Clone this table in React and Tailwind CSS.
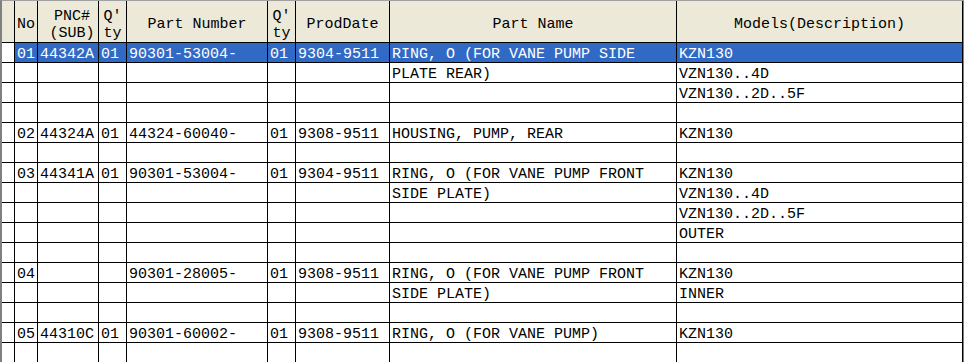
import React from "react";

const rows = [
  ["01", "44342A", "01", "90301-53004-", "01", "9304-9511", "RING, O (FOR VANE PUMP SIDE", "KZN130", true],
  ["", "", "", "", "", "", "PLATE REAR)", "VZN130..4D"],
  ["", "", "", "", "", "", "", "VZN130..2D..5F"],
  ["", "", "", "", "", "", "", ""],
  ["02", "44324A", "01", "44324-60040-", "01", "9308-9511", "HOUSING, PUMP, REAR", "KZN130"],
  ["", "", "", "", "", "", "", ""],
  ["03", "44341A", "01", "90301-53004-", "01", "9304-9511", "RING, O (FOR VANE PUMP FRONT", "KZN130"],
  ["", "", "", "", "", "", "SIDE PLATE)", "VZN130..4D"],
  ["", "", "", "", "", "", "", "VZN130..2D..5F"],
  ["", "", "", "", "", "", "", "OUTER"],
  ["", "", "", "", "", "", "", ""],
  ["04", "", "", "90301-28005-", "01", "9308-9511", "RING, O (FOR VANE PUMP FRONT", "KZN130"],
  ["", "", "", "", "", "", "SIDE PLATE)", "INNER"],
  ["", "", "", "", "", "", "", ""],
  ["05", "44310C", "01", "90301-60002-", "01", "9308-9511", "RING, O (FOR VANE PUMP)", "KZN130"],
  ["", "", "", "", "", "", "", ""],
];

const headers = [
  ["No", ""],
  ["PNC#\n(SUB)", "pl-[8px]"],
  ["Q'\nty", ""],
  ["Part Number", ""],
  ["Q'\nty", ""],
  ["ProdDate", ""],
  ["Part Name", ""],
  ["Models(Description)", ""],
];

export default function App() {
  return (
    <div
      className="w-[964px] h-[362px] overflow-hidden bg-white border-l-2 border-t border-r border-l-[#808080] border-t-[#a0a0a0] border-r-[#808080] text-black"
      style={{ fontFamily: '"Liberation Mono", "Courier New", monospace' }}
    >
      <div className="grid grid-cols-[13px_23px_61px_28px_141px_28px_94px_287px_286px] text-[15px]">
        <div className="h-[42px] bg-[#ECE9D8] border-r border-b border-black" />
        {headers.map(([h, extra], i) => (
          <div
            key={"h" + i}
            className={
              "h-[42px] bg-[#ECE9D8] border-r border-b border-black flex items-center justify-center text-center whitespace-pre leading-[17px] pt-[6px] overflow-hidden " +
              extra
            }
          >
            {h}
          </div>
        ))}
        {rows.map((r, ri) => {
          const sel = r[8] === true;
          return (
            <React.Fragment key={"r" + ri}>
              <div className="h-[20px] bg-white border-r border-b border-black" />
              {r.slice(0, 8).map((c, ci) => (
                <div
                  key={"c" + ri + "-" + ci}
                  className={
                    "h-[20px] border-r border-b border-black pl-[2px] pt-[4px] whitespace-pre overflow-hidden leading-[15px] " +
                    (sel ? "bg-[#316AC5] text-white" : "bg-white text-black")
                  }
                >
                  {c}
                </div>
              ))}
            </React.Fragment>
          );
        })}
      </div>
    </div>
  );
}
